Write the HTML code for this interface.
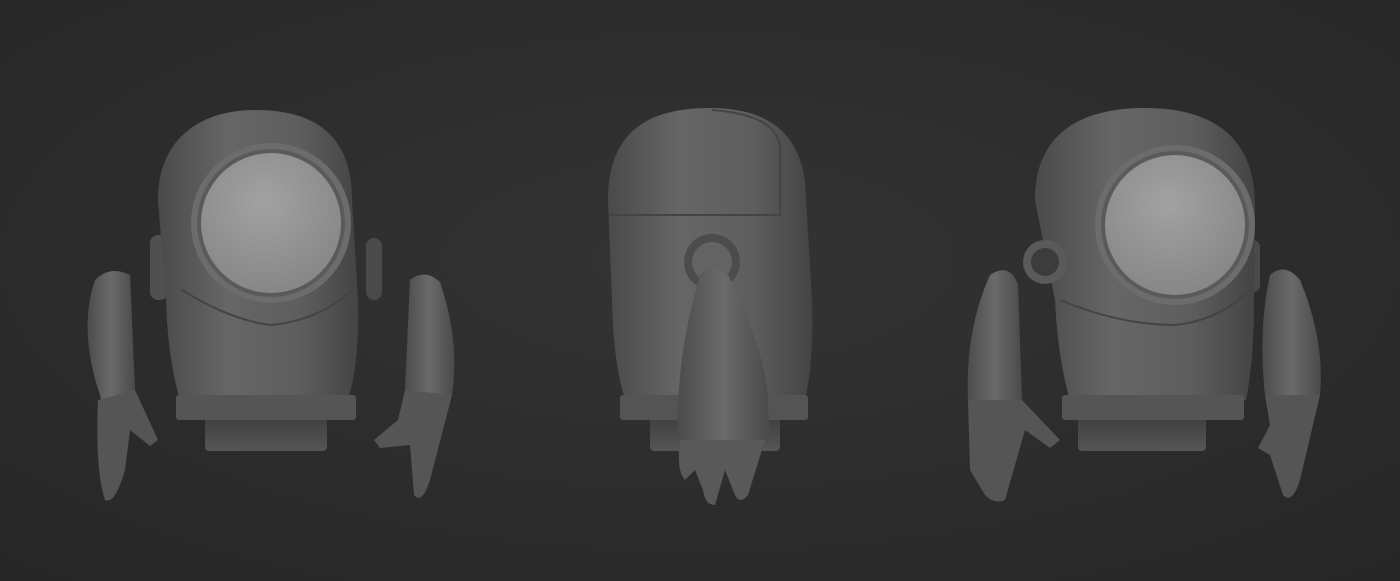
<!DOCTYPE html>
<html><head><meta charset="utf-8"><style>
html,body{margin:0;padding:0;width:1400px;height:581px;overflow:hidden;background:#2c2c2c}
svg{display:block}
</style></head><body>
<svg width="1400" height="581" viewBox="0 0 1400 581" xmlns="http://www.w3.org/2000/svg">
<defs>
<radialGradient id="bg" cx="50%" cy="45%" r="75%"><stop offset="0" stop-color="#343434"/><stop offset="1" stop-color="#262626"/></radialGradient>
<linearGradient id="body" x1="0" y1="0" x2="1" y2="0"><stop offset="0" stop-color="#4a4a4a"/><stop offset="0.35" stop-color="#666"/><stop offset="0.7" stop-color="#5e5e5e"/><stop offset="1" stop-color="#444"/></linearGradient>
<radialGradient id="face" cx="45%" cy="35%" r="70%"><stop offset="0" stop-color="#a2a2a2"/><stop offset="1" stop-color="#858585"/></radialGradient>
<linearGradient id="arm" x1="0" y1="0" x2="1" y2="0"><stop offset="0" stop-color="#4c4c4c"/><stop offset="0.5" stop-color="#6a6a6a"/><stop offset="1" stop-color="#4a4a4a"/></linearGradient>
<linearGradient id="base" x1="0" y1="0" x2="0" y2="1"><stop offset="0" stop-color="#3e3e3e"/><stop offset="1" stop-color="#555"/></linearGradient>
</defs>
<rect width="1400" height="581" fill="url(#bg)"/>

<!-- Figure 1 -->
<g>
<rect x="205" y="415" width="122" height="36" rx="4" fill="url(#base)"/>
<rect x="150" y="235" width="18" height="65" rx="8" fill="#505050"/>
<rect x="366" y="238" width="16" height="62" rx="8" fill="#4a4a4a"/>
<path d="M158 200 C158 135 205 110 255 110 C315 110 352 135 352 200 L358 300 Q360 360 348 400 L180 400 Q168 360 166 300 Z" fill="url(#body)"/>
<rect x="176" y="395" width="180" height="25" rx="3" fill="#555"/>
<circle cx="271" cy="223" r="80" fill="#6c6c6c"/>
<circle cx="271" cy="223" r="74" fill="#5a5a5a"/>
<circle cx="271" cy="223" r="70" fill="url(#face)"/>
<path d="M182 290 Q230 320 271 325 Q320 320 352 290" fill="none" stroke="#444" stroke-width="2"/>
<path d="M95 280 Q110 265 130 275 L135 390 Q125 430 110 440 L100 395 Q78 330 95 280 Z" fill="url(#arm)"/>
<path d="M98 400 L135 390 L158 440 L150 446 L130 430 L125 470 Q115 505 105 500 Q95 470 98 400Z" fill="#555"/>
<path d="M410 280 Q425 268 440 282 Q460 340 452 395 L430 440 L405 390 Z" fill="url(#arm)"/>
<path d="M405 390 L452 395 L430 480 Q422 505 414 495 L410 445 L380 448 L374 440 L398 420 Z" fill="#555"/>
</g>

<!-- Figure 2 -->
<g>
<rect x="650" y="415" width="130" height="36" rx="4" fill="url(#base)"/>
<path d="M608 200 C608 130 650 108 710 108 C770 108 806 135 806 200 L812 300 Q814 360 805 400 L625 400 Q613 360 612 300 Z" fill="url(#body)"/>
<path d="M610 215 L780 215 L780 150 Q780 115 712 110" fill="none" stroke="#444" stroke-width="2"/>
<rect x="620" y="395" width="188" height="25" rx="3" fill="#545454"/>
<circle cx="712" cy="262" r="28" fill="#4c4c4c"/>
<circle cx="712" cy="262" r="20" fill="#636363"/>
<path d="M700 275 Q712 262 728 275 Q770 360 768 410 L770 440 Q755 450 725 445 L678 440 Q675 360 700 275Z" fill="url(#arm)"/>
<path d="M680 440 L765 440 L748 495 Q740 505 735 495 L725 470 L715 505 Q705 505 703 490 L695 470 L685 480 Q676 470 680 440Z" fill="#595959"/>
</g>

<!-- Figure 3 -->
<g>
<rect x="1078" y="415" width="128" height="36" rx="4" fill="url(#base)"/>
<rect x="1245" y="240" width="15" height="52" rx="7" fill="#4a4a4a"/>
<path d="M1035 200 C1035 130 1085 108 1145 108 C1210 108 1255 135 1255 205 L1254 300 Q1254 360 1246 400 L1070 400 Q1058 360 1055 300 Z" fill="url(#body)"/>
<rect x="1062" y="395" width="182" height="25" rx="3" fill="#555"/>
<circle cx="1045" cy="262" r="22" fill="#5a5a5a"/>
<circle cx="1045" cy="262" r="14" fill="#3c3c3c"/>
<circle cx="1175" cy="225" r="80" fill="#6c6c6c"/>
<circle cx="1175" cy="225" r="74" fill="#5a5a5a"/>
<circle cx="1175" cy="225" r="70" fill="url(#face)"/>
<path d="M1060 300 Q1120 325 1175 325 Q1220 320 1250 290" fill="none" stroke="#444" stroke-width="2"/>
<path d="M990 275 Q1010 262 1018 285 L1022 400 L995 440 L968 400 Q965 330 990 275Z" fill="url(#arm)"/>
<path d="M968 400 L1022 400 L1060 440 L1050 448 L1025 430 L1005 500 Q995 505 985 495 L970 470 Z" fill="#555"/>
<path d="M1270 275 Q1285 262 1300 280 Q1325 340 1320 395 L1300 430 L1265 395 Q1258 330 1270 275Z" fill="url(#arm)"/>
<path d="M1265 395 L1320 395 L1300 480 Q1292 505 1283 495 L1270 455 L1258 448 L1270 425Z" fill="#555"/>
</g>
</svg>
</body></html>
